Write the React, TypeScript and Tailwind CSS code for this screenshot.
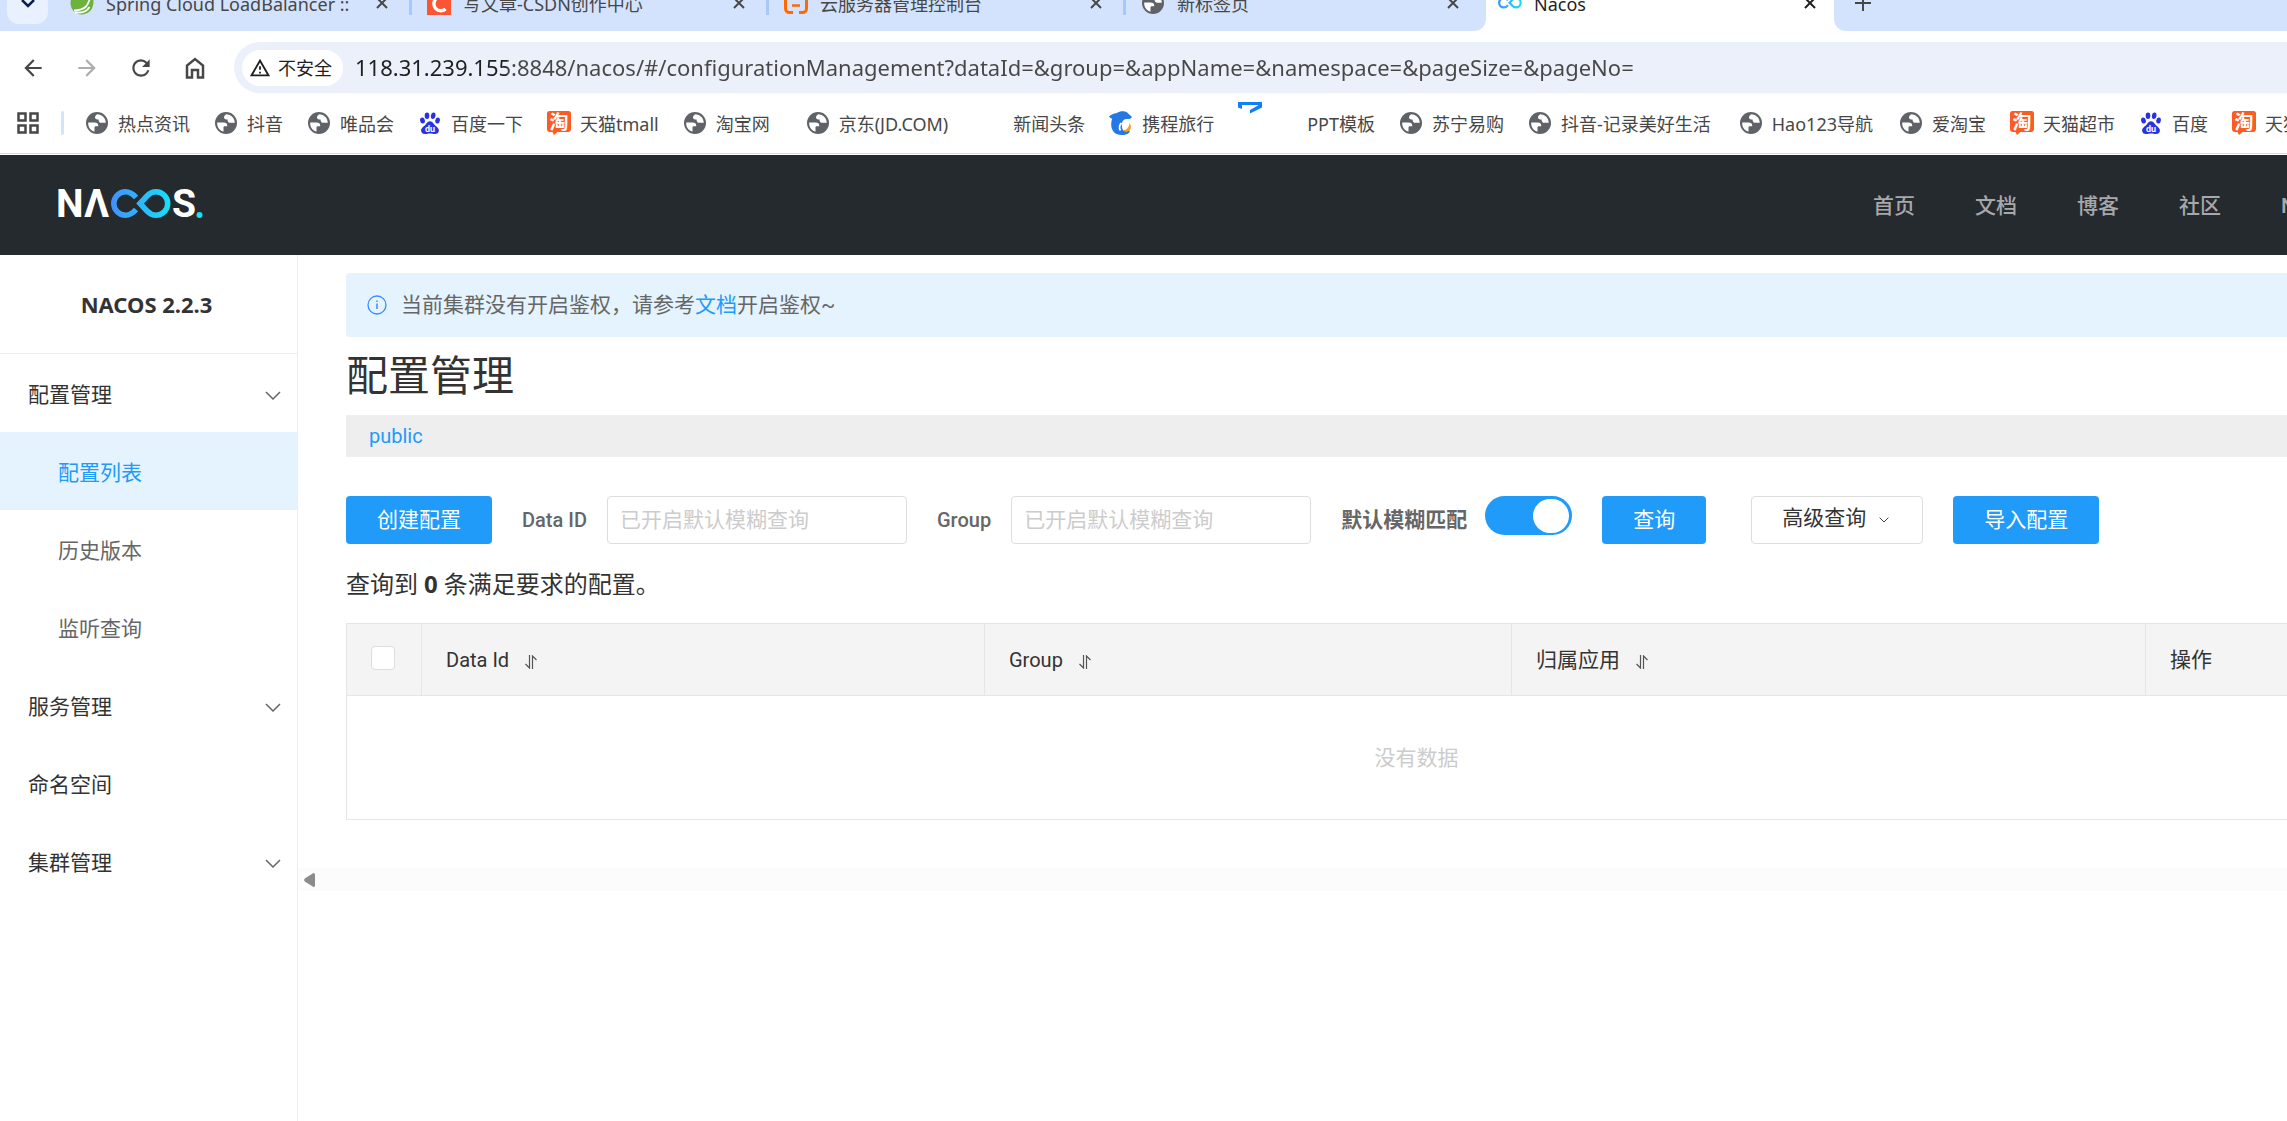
import { useState } from "react";
import {
  MdArrowBack,
  MdArrowForward,
  MdOutlineWarningAmber,
  MdRefresh,
} from "react-icons/md";

type BookmarkIcon = "globe" | "baidu" | "tao" | "trip" | "ppt" | "none";

const tabs = [
  { title: "Spring Cloud LoadBalancer ::", icon: "spring" },
  { title: "写文章-CSDN创作中心", icon: "csdn" },
  { title: "云服务器管理控制台", icon: "aliyun" },
  { title: "新标签页", icon: "globe" },
];

const bookmarks: { title: string; icon: BookmarkIcon; space?: string }[] = [
  { title: "热点资讯", icon: "globe" },
  { title: "抖音", icon: "globe" },
  { title: "唯品会", icon: "globe" },
  { title: "百度一下", icon: "baidu" },
  { title: "天猫tmall", icon: "tao" },
  { title: "淘宝网", icon: "globe", space: "pr-3" },
  { title: "京东(JD.COM)", icon: "globe", space: "pr-2" },
  { title: "新闻头条", icon: "none" },
  { title: "携程旅行", icon: "trip" },
  { title: "PPT模板", icon: "ppt" },
  { title: "苏宁易购", icon: "globe" },
  { title: "抖音-记录美好生活", icon: "globe", space: "pr-1" },
  { title: "Hao123导航", icon: "globe", space: "pr-0.5" },
  { title: "爱淘宝", icon: "globe" },
  { title: "天猫超市", icon: "tao" },
  { title: "百度", icon: "baidu" },
  { title: "天猫", icon: "tao" },
];

function Globe() {
  return (
    <svg viewBox="0 0 24 24" className="size-6 shrink-0">
      <circle cx="12" cy="12" r="11" fill="#5f6368" />
      <path
        d="M3.2 11.6h6.3c2.6 0 3.7 1.2 3.7 3.1v.6h-2.4c-.9 0-1.3.6-1.3 1.4v3.9C5.900 19.600 3.200 16.300 3.200 12.400z"
        fill="#fff"
      />
      <path
        d="M12.200 3.200c-1.300 1-2.200 2-2.200 3.100 0 1.500 1 2.100 2.300 2.100h1.300c0 2.200.9 3.400 2.700 3.400h4.500c-.1-4.700-3.900-8.600-8.600-8.600z"
        fill="#fff"
      />
    </svg>
  );
}

function Infinity({ className }: { className: string }) {
  return (
    <svg viewBox="0 0 60 29" className={className} fill="none">
      <defs>
        <linearGradient id="loop" x1="0" x2="60" y1="0" y2="0" gradientUnits="userSpaceOnUse">
          <stop offset="0" stopColor="#4190ff" />
          <stop offset="1" stopColor="#18e0f7" />
        </linearGradient>
      </defs>
      <path
        d="M25 8.500C22 5 19 2.800 14.500 2.800a11.700 11.700 0 0 0 0 23.400c4.500 0 7.500-2.200 10.500-5.700"
        stroke="url(#loop)"
        strokeWidth="5.500"
      />
      <path
        d="M29 14.500l7-7.500c2.500-2.600 5.500-4.200 9-4.200a11.700 11.700 0 0 1 0 23.400c-3.500 0-6.500-1.600-9-4.200z"
        stroke="url(#loop)"
        strokeWidth="5.500"
      />
    </svg>
  );
}

function TabIcon({ icon }: { icon: string }) {
  if (icon === "spring")
    return (
      <svg viewBox="0 0 24 24" className="size-6 shrink-0">
        <path d="M21.500 1.500c1.800 4.500 2.500 9 1.500 13A11.500 11.500 0 0 1 3.500 20 11.500 11.500 0 0 1 2 6.500 11.500 11.500 0 0 1 19 4c1-.7 1.800-1.500 2.500-2.500z" fill="#6cb33e" />
        <path d="M4 19.500c6-.2 9.500-1.500 12-4 2.500-2.600 3.300-6 4.500-10M5 21.500c7 .8 12-1 14.500-5.500" fill="none" stroke="#fff" strokeWidth="1.800" />
      </svg>
    );
  if (icon === "csdn")
    return (
      <svg viewBox="0 0 24 24" className="size-6 shrink-0">
        <rect width="24" height="24" fill="#fc5531" />
        <path d="M18.500 7.500a7 7 0 1 0 0 10.500" fill="none" stroke="#fff" strokeWidth="3.400" />
      </svg>
    );
  if (icon === "aliyun")
    return (
      <svg viewBox="0 0 24 24" className="size-6 shrink-0" fill="none" stroke="#ff6a00">
        <path d="M9 4.500H5.500a4 4 0 0 0-4 4v9a4 4 0 0 0 4 4H9M15 4.500h3.500a4 4 0 0 1 4 4v9a4 4 0 0 1-4 4H15" strokeWidth="3" />
        <path d="M8 14.500h8" strokeWidth="2.500" />
      </svg>
    );
  return <Globe />;
}

function BookmarkGlyph({ icon }: { icon: BookmarkIcon }) {
  switch (icon) {
    case "globe":
      return <Globe />;
    case "baidu":
      return (
        <svg viewBox="0 0 24 24" className="size-6 shrink-0" fill="#2932e1">
          <ellipse cx="4.500" cy="9.500" rx="2.400" ry="3.100" transform="rotate(-12 4.500 9.500)" />
          <ellipse cx="9" cy="4.700" rx="2.300" ry="3.300" />
          <ellipse cx="15.200" cy="4.800" rx="2.300" ry="3.300" transform="rotate(8 15.200 4.800)" />
          <ellipse cx="19.600" cy="9.500" rx="2.300" ry="3.100" transform="rotate(8 19.600 9.500)" />
          <path d="M12 10.200c2 0 3 1.600 4.300 3.200 1.700 2 4.600 3.200 4.600 6 0 2.200-1.700 3.600-4 3.600-1.700 0-3-.5-4.900-.5s-3.200.5-4.900.5c-2.300 0-4-1.400-4-3.600 0-2.800 2.900-4 4.600-6C9 11.800 10 10.200 12 10.200z" />
          <text x="12" y="21" textAnchor="middle" fontSize="9" fontWeight="700" fill="#fff" fontFamily="Roboto, sans-serif">
            du
          </text>
        </svg>
      );
    case "tao":
      return (
        <svg viewBox="0 0 24 24" className="size-6 shrink-0">
          <path d="M2.500 0h19A2.500 2.500 0 0 1 24 2.500v15.500a3 3 0 0 1-3 3H10.500L7 24l-1.500-3H3a3 3 0 0 1-3-3V2.500A2.500 2.500 0 0 1 2.500 0z" fill="#fb5c24" />
          <text x="12" y="17.500" textAnchor="middle" fontSize="19" fontWeight="700" fill="#fff" fontFamily="'Noto Sans CJK SC', sans-serif">
            淘
          </text>
        </svg>
      );
    case "trip":
      return (
        <svg viewBox="0 0 24 24" className="size-6 shrink-0">
          <path d="M0 5.500C2 3.500 4.500 2.500 8 2 10 .300 13-.200 16 .400c1.800.4 2.800 1.600 4 2.900L23 6c-.8 1.700-2.800 2-5 2-3 0-4.500 1.500-5 4-.4 2.500-.2 5 1 7 1 1.500 3 1.500 4.500 1l2.500-.5C20.500 22.500 17.500 24 13 24 6 24 2.500 20 2.200 14c-.1-2.500.3-4.500 1-6.500C2.200 7.500 1 7 0 5.500z" fill="#2577e3" />
          <path d="M20.500 12c2.300 3 1.700 6.500-1 8-2 1.200-4.500.8-5.500-1 3.800.4 6-2.500 6.500-7z" fill="#ff9a14" />
          <path d="M12.500 12c-2 2-2.500 5-1 7.500" fill="none" stroke="#fff" strokeWidth="1.800" />
        </svg>
      );
    case "ppt":
      return (
        <svg viewBox="0 0 24 48" className="mr-9 h-12 w-6 shrink-0" fill="#1080f5">
          <path d="M0 3h24v5.500L12 14.500V11l8-4.500V6H4v4L0 8.500z" />
        </svg>
      );
    default:
      return <span className="size-6 shrink-0" />;
  }
}

function CloseIcon() {
  return (
    <svg viewBox="0 0 12 12" className="size-3" stroke="currentColor" strokeWidth="2">
      <path d="M1 1l10 10M11 1L1 11" />
    </svg>
  );
}

function Chevron({ className }: { className: string }) {
  return (
    <svg viewBox="0 0 16 9" className={className} fill="none" stroke="currentColor" strokeWidth="1.500">
      <path d="M1 1l7 7 7-7" />
    </svg>
  );
}

function SortIcon() {
  return (
    <svg viewBox="0 0 12 14" className="mt-1 h-3.5 w-3" fill="none" stroke="#555" strokeWidth="1.200">
      <path d="M4.500 0v13L0.500 9M7.500 14V1l4 4" />
    </svg>
  );
}

function BrowserBar() {
  return (
    <div className="font-[family-name:'Noto_Sans','Noto_Sans_CJK_SC',sans-serif] text-[18px] text-[#474747]">
      <div className="flex h-[31px] items-end overflow-hidden">
        <div className="flex h-14 w-[1486px] shrink-0 items-center rounded-br-xl bg-[#d3e3fd] pl-[7px]">
          <button aria-label="搜索标签页" className="mr-[22px] flex h-[42px] w-[41px] shrink-0 items-center justify-center rounded-xl bg-[#e9f1fe] text-[#0b1d4d]">
            <svg viewBox="0 0 14 9" className="w-3.5" fill="none" stroke="currentColor" strokeWidth="2.500">
              <path d="M1 1l6 6 6-6" />
            </svg>
          </button>
          {tabs.map((tab, i) => (
            <div key={tab.title} className="flex w-[357px] shrink-0 items-center">
              <TabIcon icon={tab.icon} />
              <span className="ml-3 w-[247px] overflow-hidden pt-0.5 whitespace-nowrap">{tab.title}</span>
              <button aria-label="关闭标签页" className="ml-[23px]">
                <CloseIcon />
              </button>
              {i < 3 && <span className="ml-[21px] h-6 w-[3px] bg-[#a8c7fa]" />}
            </div>
          ))}
        </div>
        <div className="flex h-14 w-[348px] shrink-0 items-center bg-white pl-3 text-[#1f1f1f]">
          <Infinity className="w-6" />
          <span className="ml-3 w-[247px] pt-0.5">Nacos</span>
          <button aria-label="关闭标签页" className="ml-[23px]">
            <CloseIcon />
          </button>
        </div>
        <div className="flex h-14 grow items-center rounded-bl-xl bg-[#d3e3fd] pl-[21px]">
          <button aria-label="新标签页">
            <svg viewBox="0 0 16 16" className="size-4" stroke="currentColor" strokeWidth="2">
              <path d="M8 0v16M0 8h16" />
            </svg>
          </button>
        </div>
      </div>

      <div className="flex items-center pt-[11px] pl-5">
        <button aria-label="后退" className="mr-7">
          <MdArrowBack className="size-[26px]" />
        </button>
        <button aria-label="前进" className="mr-7 text-[#adadad]">
          <MdArrowForward className="size-[26px]" />
        </button>
        <button aria-label="重新加载" className="mr-7">
          <MdRefresh className="size-[26px]" />
        </button>
        <button aria-label="主页" className="mr-[26px]">
          <svg viewBox="0 0 26 26" className="size-[26px]" fill="none" stroke="currentColor" strokeWidth="2.500">
            <path d="M5 22.500V10.500l8-6.500 8 6.500v12h-5v-7.500h-6v7.500z" />
          </svg>
        </button>
        <div className="flex h-[51px] grow items-center rounded-l-full bg-[#ecf0fa] pl-2">
          <button className="flex h-9 items-center gap-[7px] rounded-full bg-white pr-[11px] pl-[7px] text-[#1f1f1f]">
            <MdOutlineWarningAmber className="size-[22px]" />
            不安全
          </button>
          <input
            aria-label="地址"
            defaultValue="118.31.239.155:8848/nacos/#/configurationManagement?dataId=&group=&appName=&namespace=&pageSize=&pageNo="
            className="ml-3 h-10 grow bg-[linear-gradient(90deg,#1f1f1f_152px,#474747_152px)] bg-clip-text pb-0.5 text-[22px] text-transparent outline-none"
          />
        </div>
      </div>

      <div className="flex h-[60px] items-center overflow-hidden whitespace-nowrap">
        <button aria-label="应用" className="ml-[17px] shrink-0">
          <svg viewBox="0 0 22 22" className="size-[22px]" fill="none" stroke="currentColor" strokeWidth="2.500">
            <path d="M1.500 1.500h7v7h-7zM13.500 1.500h7v7h-7zM1.500 13.500h7v7h-7zM13.500 13.500h7v7h-7z" />
          </svg>
        </button>
        <span className="mr-[21px] ml-[22px] h-6 w-[3px] shrink-0 rounded bg-[#d3e3fd]" />
        <div className="flex gap-6">
          {bookmarks.map((b, i) => (
            <a key={i} href="#" className={`flex h-6 items-center gap-[9px] ${b.space ?? ""}`}>
              <BookmarkGlyph icon={b.icon} />
              <span className="pt-0.5">{b.title}</span>
            </a>
          ))}
        </div>
      </div>
      <div className="h-0.5 border-t border-[#dcdcdc]" />
    </div>
  );
}

function Header() {
  return (
    <header className="flex h-[100px] shrink-0 items-center overflow-hidden bg-[#252a2f] pl-[58px]">
      <a href="#" aria-label="Nacos" className="flex h-[33px] items-start">
        <svg viewBox="0 0 145 29" className="h-[29px] w-[145px]" fontFamily="Roboto, sans-serif" fontWeight="700" fontSize="39" fill="#fff">
          <text x="-2" y="28">N</text>
          <text x="26" y="28">Λ</text>
          <text x="114" y="28">S</text>
          <svg x="53" y="0" width="60" height="29">
            <Infinity className="h-[29px] w-[60px]" />
          </svg>
          <circle cx="141.500" cy="26" r="3" fill="#18e0f7" />
        </svg>
      </a>
      <nav className="ml-auto flex w-[414px] shrink-0 gap-[60px] pt-0.5 text-[21px] font-medium whitespace-nowrap text-[#a6a8aa]">
        <a href="#">首页</a>
        <a href="#">文档</a>
        <a href="#">博客</a>
        <a href="#">社区</a>
        <a href="#">N</a>
      </nav>
    </header>
  );
}

function MenuGroup({ title }: { title: string }) {
  return (
    <button className="flex h-[78px] w-full items-center justify-between pt-1 pr-4 pl-7 text-[#333]">
      {title}
      <Chevron className="w-4 text-[#666]" />
    </button>
  );
}

function Sidebar() {
  return (
    <aside className="w-[298px] shrink-0 border-r border-[#eee] text-[21px]">
      <h2 className="flex h-[99px] items-center justify-center border-b border-[#eee] pr-1 font-[family-name:'Noto_Sans',sans-serif] text-[22px] font-bold text-[#333]">
        NACOS 2.2.3
      </h2>
      <nav>
        <MenuGroup title="配置管理" />
        <a href="#" className="flex h-[78px] items-center bg-[#e4f3fe] pt-1 pl-[58px] text-[#209bfa]">配置列表</a>
        <a href="#" className="flex h-[78px] items-center pt-1 pl-[58px] text-[#666]">历史版本</a>
        <a href="#" className="flex h-[78px] items-center pt-1 pl-[58px] text-[#666]">监听查询</a>
        <MenuGroup title="服务管理" />
        <a href="#" className="flex h-[78px] items-center pt-1 pl-7 text-[#333]">命名空间</a>
        <MenuGroup title="集群管理" />
      </nav>
    </aside>
  );
}

function SearchForm() {
  const [fuzzy, setFuzzy] = useState(true);

  return (
    <form className="mt-[39px] flex h-12 items-center whitespace-nowrap" onSubmit={(e) => e.preventDefault()}>
      <button type="button" className="h-12 rounded bg-[#209bfa] px-[31px] text-white">创建配置</button>
      <label htmlFor="dataId" className="ml-[30px] text-[20px] font-medium text-[#666]">Data ID</label>
      <input
        id="dataId"
        placeholder="已开启默认模糊查询"
        className="ml-5 h-12 w-[300px] rounded border border-[#ddd] px-3 outline-none placeholder:text-[#ccc]"
      />
      <label htmlFor="group" className="ml-[30px] text-[20px] font-medium text-[#666]">Group</label>
      <input
        id="group"
        placeholder="已开启默认模糊查询"
        className="ml-5 h-12 w-[300px] rounded border border-[#ddd] px-3 outline-none placeholder:text-[#ccc]"
      />
      <label htmlFor="fuzzy" className="ml-[30px] flex h-12 items-center gap-[18px] font-bold text-[#666]">
        默认模糊匹配
        <input
          id="fuzzy"
          type="checkbox"
          role="switch"
          className="peer sr-only"
          checked={fuzzy}
          onChange={(e) => setFuzzy(e.target.checked)}
        />
        <span className="flex h-[39px] w-[87px] items-center self-start rounded-full bg-[#ccc] p-[3px] peer-checked:justify-end peer-checked:bg-[#209bfa]">
          <span className="h-[34px] w-9 rounded-full bg-white" />
        </span>
      </label>
      <button type="submit" className="ml-[30px] h-12 rounded bg-[#209bfa] px-[31px] text-white">查询</button>
      <button type="button" className="ml-[45px] flex h-12 items-center gap-[13px] rounded border border-[#ddd] pr-[33px] pb-1 pl-[30px] text-[#333]">
        高级查询
        <Chevron className="mt-1 w-2.5" />
      </button>
      <button type="button" className="ml-[30px] h-12 rounded bg-[#209bfa] px-[31px] text-white">导入配置</button>
    </form>
  );
}

function ConfigTable() {
  return (
    <table className="mt-[22px] w-full min-w-[2141px] table-fixed border-collapse border border-[#e6e6e6] text-left">
      <thead>
        <tr className="h-[72px] bg-[#f4f4f4] text-[#333]">
          <th className="w-[75px] border border-[#e6e6e6] pb-1 pl-6">
            <input type="checkbox" aria-label="全选" className="block size-6 appearance-none rounded border border-[#ddd] bg-white" />
          </th>
          <th className="w-[563px] border border-[#e6e6e6] pl-6 text-[20px] font-normal">
            <span className="flex items-center gap-4">Data Id <SortIcon /></span>
          </th>
          <th className="w-[527px] border border-[#e6e6e6] pl-6 text-[20px] font-normal">
            <span className="flex items-center gap-4">Group <SortIcon /></span>
          </th>
          <th className="w-[634px] border border-[#e6e6e6] pl-6 font-normal">
            <span className="flex items-center gap-4">归属应用 <SortIcon /></span>
          </th>
          <th className="border border-[#e6e6e6] pl-6 font-normal">操作</th>
        </tr>
      </thead>
      <tbody>
        <tr className="h-[124px]">
          <td colSpan={5} className="text-center text-[#ccc]">没有数据</td>
        </tr>
      </tbody>
    </table>
  );
}

export default function App() {
  return (
    <div className="flex min-h-screen flex-col overflow-hidden bg-white font-[family-name:Roboto,'Noto_Sans_CJK_SC',sans-serif] text-[21px] leading-[30px]">
      <BrowserBar />
      <Header />
      <div className="flex grow">
        <Sidebar />
        <main className="min-w-0 grow overflow-hidden">
          <div className="pt-[18px] pl-12">
            <div className="flex h-16 items-center rounded-l bg-[#e4f3fe] pl-[21px] text-[#666]">
              <svg viewBox="0 0 20 20" className="mr-3.5 size-5" fill="none" stroke="#3b8cff" strokeWidth="1.300">
                <circle cx="10" cy="10" r="9" />
                <path d="M10 8.500v5.500M10 5.500v1.500" strokeWidth="1.500" />
              </svg>
              <p>
                当前集群没有开启鉴权，请参考
                <a href="#" className="text-[#209bfa]">文档</a>
                开启鉴权~
              </p>
            </div>
            <h1 className="mt-[10px] text-[42px] leading-[60px] text-[#333]">配置管理</h1>
            <div className="mt-2 flex h-[42px] items-center bg-[#eee] pl-[23px]">
              <a href="#" className="text-[20px] text-[#209bfa]">public</a>
            </div>
            <SearchForm />
            <p className="mt-6 text-[24px] leading-8 text-[#333]">
              查询到 <strong className="font-[family-name:'Noto_Sans',sans-serif]">0</strong> 条满足要求的配置。
            </p>
            <ConfigTable />
          </div>
          <div className="mt-12 flex h-[23px] items-center bg-[#fcfcfc] pl-1.5">
            <svg viewBox="0 0 11 14" className="w-[11px]" fill="#8b8b8b">
              <path d="M9.500 0Q11 0 11 1.500v11Q11 14 9.500 14L.800 8.500Q-.500 7 .800 5.500z" />
            </svg>
          </div>
        </main>
      </div>
    </div>
  );
}
